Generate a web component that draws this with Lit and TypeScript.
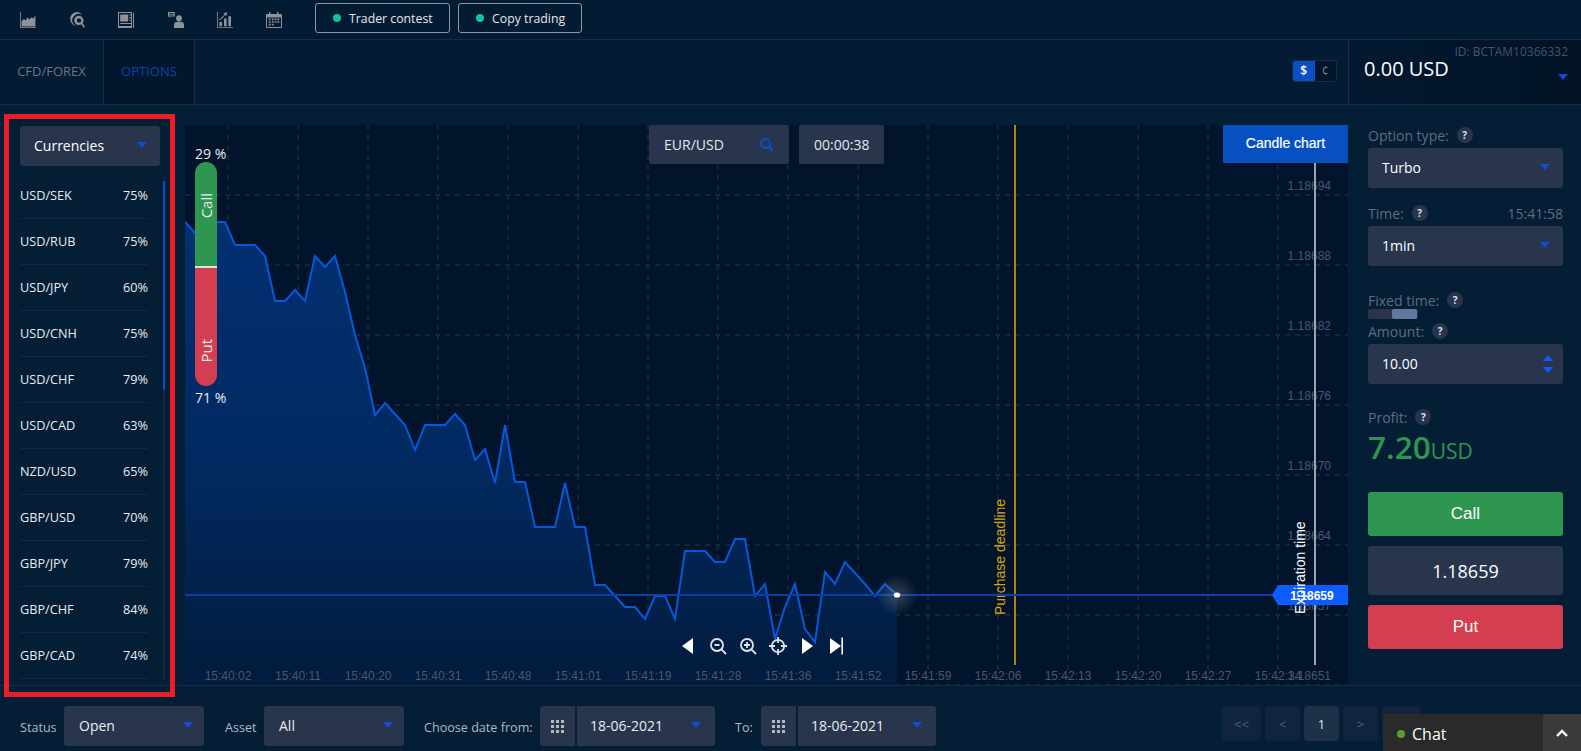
import { LitElement, html, svg, css } from 'lit';
import { customElement } from 'lit/decorators.js';

const PAIRS = [
  ['USD/SEK', '75%'], ['USD/RUB', '75%'], ['USD/JPY', '60%'], ['USD/CNH', '75%'],
  ['USD/CHF', '79%'], ['USD/CAD', '63%'], ['NZD/USD', '65%'], ['GBP/USD', '70%'],
  ['GBP/JPY', '79%'], ['GBP/CHF', '84%'], ['GBP/CAD', '74%'],
];

const TIMES = [
  '15:40:02', '15:40:11', '15:40:20', '15:40:31', '15:40:48', '15:41:01', '15:41:19', '15:41:28',
  '15:41:36', '15:41:52', '15:41:59', '15:42:06', '15:42:13', '15:42:20', '15:42:27', '15:42:34',
];

const PRICES: [string, number][] = [
  ['1.18694', 190], ['1.18688', 260], ['1.18682', 330], ['1.18676', 400],
  ['1.18670', 470], ['1.18664', 540], ['1.18657', 610], ['1.18651', 680],
];

// page coordinates, the chart svg's viewBox starts at 185,125
const LINE = `185,222 195,233 205,222 215,222 225,222 235,245 245,245 255,245 265,256 275,301 285,301
295,290 305,301 315,256 325,267 335,256 345,292 355,335 365,368 375,415 385,403 395,414 405,425 415,450
425,425 435,425 445,425 455,414 465,425 475,460 485,449 495,483 505,425 515,482 525,482 535,527 545,527
555,527 565,483 575,527 585,527 595,585 605,585 615,596 625,607 635,607 645,619 655,596 665,596 675,619
685,551 695,551 705,551 715,562 725,562 735,539 745,539 755,596 765,584 775,639 785,607 795,584 805,629
815,642 825,572 835,584 845,562 855,573 865,584 875,596 885,584 897,595`;

const arrow = html`<svg class="caret" viewBox="0 0 10 6"><path d="M0 0h10L5 6z" /></svg>`;
const help = html`<span class="help">?</span>`;
const grid = html`<svg class="grid-ic" viewBox="0 0 13 13"><path d="M0 0h3v3H0zM5 0h3v3H5zM10 0h3v3h-3zM0 5h3v3H0zM5 5h3v3H5zM10 5h3v3h-3zM0 10h3v3H0zM5 10h3v3H5zM10 10h3v3h-3z" /></svg>`;

@customElement('app-root')
export class AppRoot extends LitElement {
  static styles = css`
    :host {
      display: block;
      position: relative;
      width: 1581px;
      height: 751px;
      overflow: hidden;
      background: #031e35;
      font-family: 'Open Sans', 'Liberation Sans', sans-serif;
      color: #fff;
    }
    .top {
      display: flex;
      align-items: center;
      height: 39px;
      background: #031b33;
      box-sizing: content-box;
      border-bottom: 1px solid #12304d;
    }
    .nav-icons {
      display: flex;
      gap: 33.2px;
      padding-left: 20px;
      width: 315px;
      box-sizing: border-box;
    }
    .nav-icons svg {
      width: 16px;
      height: 16px;
      fill: #8e9398;
      display: block;
    }
    .top-btn {
      display: flex;
      align-items: center;
      gap: 8px;
      height: 30px;
      margin-right: 8px;
      padding-left: 17px;
      border: 1px solid #8e98a3;
      border-radius: 3px;
      font-size: 12.3px;
      color: #e3e8ec;
      margin-top: -3px;
      box-sizing: border-box;
    }
    .top-btn i {
      width: 8px;
      height: 8px;
      border-radius: 50%;
      background: #12c298;
    }
    .b1 { width: 135px; }
    .b2 { width: 124px; }
    .tabs {
      display: flex;
      height: 64px;
      background: #031b33;
      border-bottom: 1px solid #12304d;
    }
    .tab {
      display: flex;
      align-items: center;
      justify-content: center;
      font-size: 13px;
      padding-bottom: 2px;
      box-sizing: border-box;
      border-right: 1px solid #12304d;
      color: #6a7885;
    }
    .tab.cfd { width: 104px; }
    .tab.opt { width: 91px; color: #0a45b0; background: #02162c; }
    .tabs .spacer { flex: 1; display: flex; justify-content: flex-end; align-items: center; padding-right: 11px; }
    .toggle {
      display: flex;
      width: 45px;
      height: 22px;
      box-sizing: border-box;
      border: 1px solid #12304d;
      border-radius: 3px;
      background: #02162c;
      font-size: 12px;
      overflow: hidden;
      margin-top: -3px;
    }
    .toggle span { flex: 1; display: flex; align-items: center; justify-content: center; color: #7c8894; }
    .toggle .on { background: #0a50c4; color: #fff; font-weight: 600; }
    .balance {
      position: relative;
      width: 233px;
      border-left: 1px solid #12304d;
      box-sizing: border-box;
      background: linear-gradient(90deg, #03192f, #011226);
      padding-left: 15px;
    }
    .acc-id {
      position: absolute;
      top: 3px;
      right: 13px;
      font-size: 12px;
      color: #43566b;
    }
    .amount-total { font-size: 20px; line-height: 28px; margin-top: 15px; }
    .balance .caret { position: absolute; right: 13px; top: 34px; }
    .caret { width: 10px; height: 6px; fill: #0f4fd0; display: block; flex: none; }

    .main { display: flex; height: 580px; border-bottom: 1px solid #12304d; }
    .side { width: 185px; flex: none; padding: 21px 0 0 20px; box-sizing: border-box; position: relative; }
    .select {
      display: flex;
      align-items: center;
      justify-content: space-between;
      height: 40px;
      background: #28354d;
      border-radius: 3px;
      box-sizing: border-box;
      padding: 0 13px 2px 14px;
      font-size: 14px;
    }
    .side .select { width: 140px; margin-bottom: 7px; }
    .rows-wrap { display: flex; gap: 15px; }
    .rows { width: 128px; }
    .row {
      display: flex;
      justify-content: space-between;
      align-items: center;
      height: 46px;
      padding-bottom: 2px;
      box-sizing: border-box;
      border-bottom: 1px solid #0f2b47;
      font-size: 12.7px;
      color: #e9edf0;
    }
    .track { width: 2px; height: 499px; margin-top: 8px; background: #13293f; }
    .track i { display: block; height: 209px; background: #0a50c4; }

    .chart {
      position: relative;
      width: 1163px;
      height: 560px;
      flex: none;
      margin-top: 20px;
      background: #02142b;
      font-family: 'Liberation Sans', Arial, sans-serif;
    }
    .chart > svg.plot { display: block; position: absolute; inset: 0; width: 100%; height: 100%; }
    .plot text { font-family: 'Liberation Sans', Arial, sans-serif; }
    .pair-box {
      position: absolute;
      top: 0;
      left: 464px;
      display: flex;
      gap: 10px;
      font-family: 'Open Sans', sans-serif;
      font-size: 14px;
      color: #e3e8ec;
    }
    .pair-box > div {
      display: flex;
      align-items: center;
      height: 39px;
      background: #28354d;
      box-sizing: border-box;
      border-radius: 2px;
      padding: 0 15px;
    }
    .pair { width: 140px; justify-content: space-between; }
    .clock { width: 85px; }
    .pair svg { width: 14px; height: 14px; fill: none; stroke: #0a4fbf; stroke-width: 2.2; }
    .candle {
      position: absolute;
      top: 0;
      right: 0;
      width: 125px;
      height: 38px;
      padding-bottom: 2px;
      box-sizing: border-box;
      background: #0650c2;
      display: flex;
      align-items: center;
      justify-content: center;
      font-size: 14px;
      -webkit-text-stroke: 0.2px #fff;
    }
    .pill {
      position: absolute;
      top: 20px;
      left: 10px;
      display: flex;
      flex-direction: column;
      font-family: 'Open Sans', sans-serif;
      font-size: 14px;
      color: #e8ecef;
      width: 40px;
    }
    .pill .pct { height: 17px; line-height: 17px; }
    .pill .bar {
      width: 22px;
      height: 224px;
      border-radius: 11px;
      overflow: hidden;
      display: flex;
      flex-direction: column;
    }
    .pill .pct.low { margin-top: 3px; }
    .bar .call { height: 73px; background: #2e9650; border-bottom: 2px solid #dfe3dc; padding-top: 31px; box-sizing: content-box; }
    .bar .put { flex: 1; background: #d33f50; display: flex; align-items: flex-end; padding-bottom: 23px; }
    .bar span {
      display: block;
      width: 22px;
      font-size: 15px;
      writing-mode: vertical-rl;
      transform: rotate(180deg);
      line-height: 22px;
      text-align: center;
    }
    .controls {
      position: absolute;
      left: 494px;
      top: 512px;
      display: flex;
      align-items: center;
      gap: 12px;
    }
    .controls svg { display: block; width: 18px; height: 18px; fill: #fff; stroke: none; }
    .controls svg.lens { fill: none; stroke: #dfe3e6; stroke-width: 1.8; }

    .right { flex: 1; padding: 21px 18px 0 20px; box-sizing: border-box; }
    .label {
      display: flex;
      align-items: center;
      gap: 8px;
      height: 18px;
      font-size: 14px;
      color: #5f6d7d;
    }
    .label .val { margin-left: auto; }
    .label.time { margin-top: 16px; }
    .label.fixed { margin-top: 25px; }
    .label.amount { margin-top: 3px; }
    .label.prof { margin-top: 24px; }
    .help {
      width: 16px;
      height: 16px;
      border-radius: 50%;
      background: #28354d;
      color: #dfe4ea;
      font-size: 10px;
      font-weight: 700;
      display: flex;
      align-items: center;
      justify-content: center;
    }
    .right .select { margin-top: 4px; }
    .select .num { display: flex; flex-direction: column; gap: 6px; margin: 2px -3px 0 0; }
    .num svg { width: 10px; height: 6px; fill: #0d5cff; display: block; }
    .slider { width: 50px; height: 10px; border-radius: 2px; background: #28354d; display: flex; justify-content: flex-end; margin: 0; }
    .slider i { width: 25px; background: #5f7a9e; border-radius: 2px; margin-right: 1px; }
    .profit { color: #2e9650; font-size: 31.5px; font-weight: 600; line-height: 42px; }
    .profit small { font-size: 21px; font-weight: 500; }
    .btn {
      display: flex;
      align-items: center;
      justify-content: center;
      border-radius: 3px;
      font-size: 17px;
      height: 44px;
      font-family: 'Liberation Sans', Arial, sans-serif;
    }
    .btn.call { background: #2e9650; margin-top: 20px; }
    .btn.rate { background: #28354d; height: 49px; margin: 10px 0; font-family: 'Open Sans', sans-serif; font-size: 18px; }
    .btn.putb { background: #d33f50; }

    .bottom {
      display: flex;
      align-items: flex-start;
      padding: 20px 0 0 20px;
      font-size: 12.6px;
      color: #aebac6;
    }
    .bottom .cap { height: 40px; display: flex; align-items: center; padding-top: 2px; box-sizing: border-box; flex: none; }
    .cap.c-status { width: 44px; }
    .cap.c-asset { width: 39px; }
    .cap.c-from { width: 116px; }
    .cap.c-to { width: 26px; }
    .bottom .select { width: 140px; margin-right: 21px; color: #e8ecef; font-size: 14px; padding: 0 11px 2px 15px; }
    .bottom .select.asset { margin-right: 20px; }
    .date { display: flex; gap: 2px; margin-right: 20px; }
    .date .ic { width: 35px; height: 40px; background: #28354d; border-radius: 3px 0 0 3px; display: flex; align-items: center; justify-content: center; }
    .grid-ic { width: 13px; height: 13px; fill: #b3b8bd; display: block; }
    .bottom .date .select { width: 138px; margin: 0; border-radius: 0 3px 3px 0; padding: 0 14px 2px 13px; }
    .pager { display: flex; gap: 4px; margin-left: 266px; }
    .pager span {
      width: 35px;
      height: 35px;
      background: #10243d;
      border-radius: 4px;
      color: #53647a;
      display: flex;
      align-items: center;
      justify-content: center;
      font-size: 13px;
    }
    .pager span.wide { width: 39px; }
    .pager span.on { background: #1f3049; color: #dfe4ea; }

    .chat {
      position: absolute;
      right: 0;
      bottom: 0;
      width: 198px;
      height: 37px;
      background: #2a2a2a;
      display: flex;
      align-items: center;
      font-size: 16px;
      color: #fff;
    }
    .chat i { width: 8px; height: 8px; border-radius: 50%; background: #5a9e32; margin: 3px 7px 0 14px; }
    .chat b { font-weight: 400; margin-top: 2px; }
    .chat .up { margin-left: auto; width: 38px; height: 37px; background: #3a3a3a; display: flex; align-items: center; justify-content: center; }
    .chat svg { width: 12px; height: 8px; fill: none; stroke: #fff; stroke-width: 2.4; }

    .frame {
      position: absolute;
      left: 4px;
      top: 114px;
      width: 171px;
      height: 583px;
      box-sizing: border-box;
      border: 5px solid #ee1c25;
      pointer-events: none;
    }
  `;

  renderPlot() {
    const xs = Array.from({ length: 16 }, (_, i) => 228 + i * 70);
    const ys = Array.from({ length: 8 }, (_, i) => 195 + i * 70);
    return html`<svg class="plot" viewBox="185 125 1163 560">
      <defs>
        <linearGradient id="fill" x1="0" y1="0" x2="0" y2="1">
          <stop offset="0" stop-color="#023072" />
          <stop offset="0.5" stop-color="#022a62" />
          <stop offset="1" stop-color="#021b3d" />
        </linearGradient>
        <radialGradient id="glow">
          <stop offset="0" stop-color="#9aa6a8" stop-opacity="0.32" />
          <stop offset="1" stop-color="#9aa6a8" stop-opacity="0" />
        </radialGradient>
      </defs>
      ${xs.map(x => svg`<line x1=${x} x2=${x} y1="125" y2="685" stroke="#1c2b40" stroke-width="1.4" stroke-dasharray="5 5" />`)}
      ${ys.map(y => svg`<line x1="185" x2="1348" y1=${y} y2=${y} stroke="#1c2b40" stroke-width="1.4" stroke-dasharray="5 5" />`)}
      <polygon points="${LINE} 897,685 185,685" fill="url(#fill)" />
      <polyline points=${LINE} fill="none" stroke="#0659dc" stroke-width="2" stroke-linejoin="miter" />
      ${PRICES.map(([p, y]) => svg`<text x="1331" y=${y} text-anchor="end" font-size="12" fill="#49586b">${p}</text>`)}
      ${TIMES.map((t, i) => svg`<text x=${xs[i]} y="680" text-anchor="middle" font-size="12" fill="#49586b">${t}</text>`)}
      <line x1="1015" x2="1015" y1="125" y2="665" stroke="#a8860f" stroke-width="2" />
      <text transform="translate(1005 615) rotate(-90)" font-size="14" fill="#dca800">Purchase deadline</text>
      <line x1="1315" x2="1315" y1="163" y2="665" stroke="#9aa3b0" stroke-width="2" />
      <line x1="185" x2="1275" y1="595" y2="595" stroke="#0a3fa8" stroke-width="2" />
      <circle cx="897" cy="595" r="21" fill="url(#glow)" />
      <ellipse cx="897" cy="595" rx="3.2" ry="2.6" fill="#fff" />
      <path d="M1272 595l6-10h70v20h-70z" fill="#0d5cff" />
      <text x="1312" y="600" text-anchor="middle" font-size="12" font-weight="700" fill="#fff">1.18659</text>
      <text transform="translate(1305 614) rotate(-90)" font-size="14" fill="#fff">Expiration time</text>
    </svg>`;
  }

  render() {
    return html`
      <div class="top">
        <div class="nav-icons">
          <svg viewBox="0 0 16 16"><path d="M0 0h.8v15.2H16v.8H0z" /><path d="M1.6 14.4V9l2.4-2 1.6 1.4L7.4 5.6l2 2 2.2-2.4 1.6 1.4L15.4 3.4v11z" /></svg>
          <svg viewBox="0 0 16 16"><path fill-rule="evenodd" d="M7 0a7.2 7.2 0 0 1 6 3.2A5 5 0 0 0 5.6 3.4 6 6 0 0 0 5 12.6a7 7 0 0 0 2.6 1.6A7.2 7.2 0 0 1 7 0z" /><path fill-rule="evenodd" d="M10 3.8a4.6 4.6 0 0 1 3.6 7.4l2.4 3.6-1.2.9-2.5-3.5A4.6 4.6 0 1 1 10 3.8zm0 2.4a2.2 2.2 0 1 0 0 4.4 2.2 2.2 0 0 0 0-4.4z" /></svg>
          <svg viewBox="0 0 16 16"><path fill-rule="evenodd" d="M0 0h14v1H1v13h12V1h1v15H0zM15 1h1v15h-1zM2.2 2.4h8v7h-8zM11.2 2.4H13v1h-1.8zM11.2 5h1.8v1h-1.8zM11.2 7.6h1.8v1h-1.8zM2.2 11h10.8v1H2.2z" /></svg>
          <svg viewBox="0 0 16 16"><path fill-rule="evenodd" d="M0 0h6.8v4.6H2L.8 5.8V4.6H0zm1 1v.8h4.8V1zm0 1.8v.8h4.8v-.8z" /><circle cx="11" cy="6.2" r="2.9" /><path d="M6 16v-3.2C6 10.6 8 9.6 11 9.6s5 1 5 3.2V16z" /></svg>
          <svg viewBox="0 0 16 16"><path d="M0 0h.8v15.2H16v.8H0z" /><path d="M2.4 10h2.6v4.2H2.4zM7 6.6h2.6v7.6H7zM11.4 4.2H14v10h-2.6z" /><path d="M2 7.8l5.6-5.4-1.2-1.2L10.2.2l-.8 3.8-1.1-1L2.7 8.6z" /></svg>
          <svg viewBox="0 0 16 16"><path fill-rule="evenodd" d="M3 0h1.4v2H11V0h1.4v2H15a1 1 0 0 1 1 1v12a1 1 0 0 1-1 1H1a1 1 0 0 1-1-1V3a1 1 0 0 1 1-1h2zM1 5.4V15h14V5.4zM2.8 6.6h1.8v1.6H2.8zM5.8 6.6h1.8v1.6H5.8zM8.6 6.6h1.8v1.6H8.6zM11.4 6.6h1.8v1.6h-1.8zM2.8 9.2h1.8v1.6H2.8zM5.8 9.2h1.8v1.6H5.8zM8.6 9.2h1.8v1.6H8.6zM11.4 9.2h1.8v1.6h-1.8zM2.8 11.8h1.8v1.6H2.8zM5.8 11.8h1.8v1.6H5.8z" /></svg>
        </div>
        <div class="top-btn b1"><i></i>Trader contest</div>
        <div class="top-btn b2"><i></i>Copy trading</div>
      </div>
      <div class="tabs">
        <div class="tab cfd">CFD/FOREX</div>
        <div class="tab opt">OPTIONS</div>
        <div class="spacer">
          <div class="toggle"><span class="on">$</span><span>¢</span></div>
        </div>
        <div class="balance">
          <div class="acc-id">ID: BCTAM10366332</div>
          <div class="amount-total">0.00 USD</div>
          ${arrow}
        </div>
      </div>
      <div class="main">
        <div class="side">
          <div class="select">Currencies ${arrow}</div>
          <div class="rows-wrap">
            <div class="rows">
              ${PAIRS.map(([name, pct]) => html`<div class="row"><span>${name}</span><span>${pct}</span></div>`)}
            </div>
            <div class="track"><i></i></div>
          </div>
        </div>
        <div class="chart">
          ${this.renderPlot()}
          <div class="pair-box">
            <div class="pair">EUR/USD <svg viewBox="0 0 14 14"><circle cx="5.6" cy="5.6" r="4.4" /><path d="M8.8 8.8L13 13" /></svg></div>
            <div class="clock">00:00:38</div>
          </div>
          <div class="candle">Candle chart</div>
          <div class="pill">
            <div class="pct">29 %</div>
            <div class="bar">
              <div class="call"><span>Call</span></div>
              <div class="put"><span>Put</span></div>
            </div>
            <div class="pct low">71 %</div>
          </div>
          <div class="controls">
            <svg viewBox="0 0 18 18"><path d="M14 1v16L3 9z" /></svg>
            <svg class="lens" viewBox="0 0 18 18"><circle cx="8" cy="8" r="6" /><path d="M12.4 12.4L17 17M5.5 8h5" /></svg>
            <svg class="lens" viewBox="0 0 18 18"><circle cx="8" cy="8" r="6" /><path d="M12.4 12.4L17 17M5 8h6M8 5v6" /></svg>
            <svg class="lens" viewBox="0 0 18 18"><circle cx="9" cy="9" r="6.2" /><path d="M9 0v6M9 12v6M0 9h6M12 9h6" /></svg>
            <svg viewBox="0 0 18 18"><path d="M3 1v16l11-8z" /></svg>
            <svg viewBox="0 0 18 18"><path d="M1 1v16l11-8zM12.4.5H14v17h-1.6z" /></svg>
          </div>
        </div>
        <div class="right">
          <div class="label">Option type: ${help}</div>
          <div class="select">Turbo ${arrow}</div>
          <div class="label time">Time: ${help}<span class="val">15:41:58</span></div>
          <div class="select">1min ${arrow}</div>
          <div class="label fixed">Fixed time: ${help}</div>
          <div class="slider"><i></i></div>
          <div class="label amount">Amount: ${help}</div>
          <div class="select">10.00
            <div class="num">
              <svg viewBox="0 0 10 6"><path d="M5 0l5 6H0z" /></svg>
              <svg viewBox="0 0 10 6"><path d="M0 0h10L5 6z" /></svg>
            </div>
          </div>
          <div class="label prof">Profit: ${help}</div>
          <div class="profit">7.20<small>USD</small></div>
          <div class="btn call">Call</div>
          <div class="btn rate">1.18659</div>
          <div class="btn putb">Put</div>
        </div>
      </div>
      <div class="bottom">
        <div class="cap c-status">Status</div>
        <div class="select">Open ${arrow}</div>
        <div class="cap c-asset">Asset</div>
        <div class="select asset">All ${arrow}</div>
        <div class="cap c-from">Choose date from:</div>
        <div class="date"><div class="ic">${grid}</div><div class="select">18-06-2021 ${arrow}</div></div>
        <div class="cap c-to">To:</div>
        <div class="date"><div class="ic">${grid}</div><div class="select">18-06-2021 ${arrow}</div></div>
        <div class="pager">
          <span class="wide">&lt;&lt;</span><span>&lt;</span><span class="on">1</span><span>&gt;</span><span class="wide">&gt;&gt;</span>
        </div>
      </div>
      <div class="chat">
        <i></i><b>Chat</b>
        <div class="up"><svg viewBox="0 0 12 8"><path d="M1 7l5-5 5 5" /></svg></div>
      </div>
      <div class="frame"></div>
    `;
  }
}
